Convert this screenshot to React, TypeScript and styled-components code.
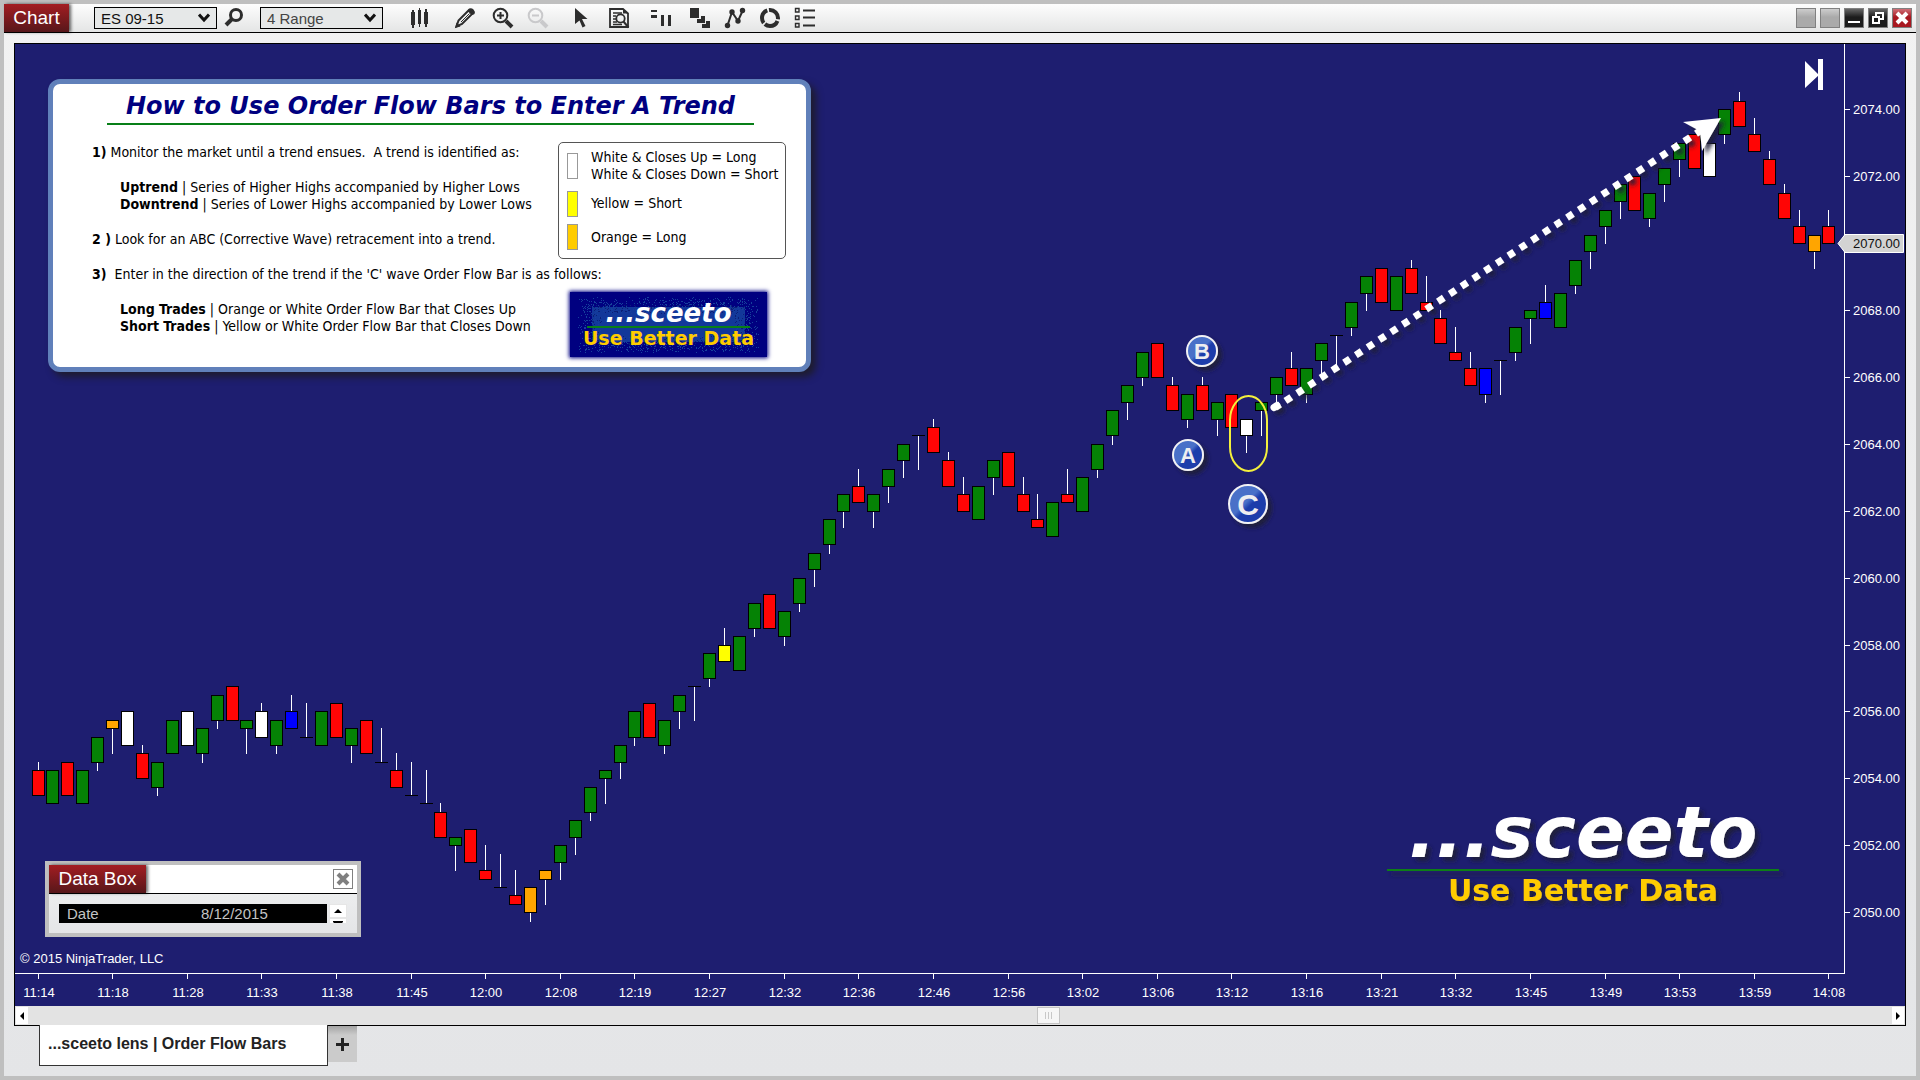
import React from "react";
import styled, { createGlobalStyle } from "styled-components";

const navy = "#1e1e70";
const sans = '"Liberation Sans", Arial, sans-serif';
const humanist = '"DejaVu Sans Condensed", "DejaVu Sans", Tahoma, sans-serif';
const display = '"DejaVu Sans", Verdana, sans-serif';

const GlobalStyle = createGlobalStyle`
  *, *::before, *::after { box-sizing: border-box; }
  body { margin: 0; font-family: ${sans}; }
  button, select { font: inherit; }
`;

/* ---------- market data ---------- */

type Candle = [color: string, high: number, top: number, bottom: number, low: number];

const fills: Record<string, string> = {
  R: "#ff0505",
  G: "#058205",
  W: "#ffffff",
  O: "#ffa500",
  Y: "#ffff00",
  B: "#0000ff",
  D: "#000000",
};

/* Each bar: colour, high, body top, body bottom, low, in quarter-point ticks above 2050.00 */
const candles: Candle[] = `
R 18 17 14 14|G 17 17 13 13|R 18 18 14 14|G 17 17 13 13|G 21 21 18 17|O 23 23 22 19|W 24 24 20 20|R 20 19 16 16
G 18 18 15 14|G 23 23 19 19|W 24 24 20 20|G 22 22 19 18|G 26 26 23 22|R 27 27 23 23|G 23 23 22 19|W 25 24 21 21
G 23 23 20 19|B 26 24 22 22|D 25 21 21 21|G 24 24 20 20|R 25 25 21 21|G 22 22 20 18|R 23 23 19 19|D 22 18 18 18
R 19 17 15 15|D 18 14 14 14|D 17 13 13 13|R 13 12 9 9|G 9 9 8 5|R 10 10 6 6|R 8 5 4 4|D 7 3 3 3
R 5 2 1 1|O 3 3 0 -1|O 5 5 4 1|G 8 8 6 4|G 11 11 9 7|G 15 15 12 11|G 17 17 16 13|G 20 20 18 16
G 24 24 21 20|R 25 25 21 21|G 23 23 20 19|G 26 26 24 22|D 27 27 27 23|G 31 31 28 27|Y 34 32 30 30|G 33 33 29 29
G 37 37 34 33|R 38 38 34 34|G 36 36 33 32|G 40 40 37 36|G 43 43 41 39|G 47 47 44 43|G 50 50 48 46|R 53 51 49 49
G 50 50 48 46|G 53 53 51 49|G 56 56 54 52|D 57 57 57 53|R 59 58 55 55|R 55 54 51 51|R 52 50 48 48|G 51 51 47 47
G 54 54 52 50|R 55 55 51 51|R 52 50 48 48|R 50 47 46 46|G 49 49 45 45|R 53 50 49 49|G 52 52 48 48|G 56 56 53 52
G 60 60 57 56|G 63 63 61 59|G 67 67 64 63|R 68 68 64 64|R 64 63 60 60|G 62 62 59 58|R 64 63 60 60|G 61 61 59 57
R 62 62 58 58|W 59 59 57 55|G 61 61 60 57|G 64 64 62 61|R 67 65 63 63|G 65 65 62 61|G 68 68 66 64|D 69 69 69 65
G 73 73 70 69|G 76 76 74 72|R 77 77 73 73|G 76 76 72 72|R 78 77 74 74|R 76 73 72 72|R 72 71 68 68|R 70 67 66 66
R 67 65 63 63|B 65 65 62 61|D 66 66 66 62|G 70 70 67 66|G 72 72 71 68|B 75 73 71 71|G 74 74 70 70|G 78 78 75 74
G 81 81 79 77|G 84 84 82 80|G 87 87 85 83|R 88 88 84 84|G 86 86 83 82|G 89 89 87 85|G 92 92 90 88|R 93 93 89 89
W 92 92 88 88|G 96 96 93 92|R 98 97 94 94|R 95 93 91 91|R 91 90 87 87|R 87 86 83 83|R 84 82 80 80|O 81 81 79 77
R 84 82 80 80`
  .trim()
  .split(/[|\n]/)
  .map((bar) => {
    const [color, ...values] = bar.trim().split(" ");
    return [color, ...values.map(Number)] as Candle;
  });

const times = [
  "11:14", "11:18", "11:28", "11:33", "11:38", "11:45", "12:00", "12:08", "12:19",
  "12:27", "12:32", "12:36", "12:46", "12:56", "13:02", "13:06", "13:12", "13:16",
  "13:21", "13:32", "13:45", "13:49", "13:53", "13:59", "14:08",
];

const prices = [2074, 2072, 2068, 2066, 2064, 2062, 2060, 2058, 2056, 2054, 2052, 2050];

const barX = (index: number) => 38 + index * 15 - Math.ceil(index / 13.3);
const tickY = (tick: number) => Math.round(912.2 - tick * 8.365);
const priceY = (price: number) => tickY((price - 2050) * 4);

/* ---------- window frame ---------- */

const Frame = styled.div`
  min-height: 100vh;
  display: flex;
  flex-direction: column;
  border: 4px solid #bfbfbf;
  background: linear-gradient(#f2f2f2, #e4e5e7);
`;

const TitleBar = styled.header`
  display: flex;
  align-items: center;
  height: 29px;
  padding-right: 4px;
  border-bottom: 1px solid #000;
  background: linear-gradient(#fdfdfd, #e4e5e5);
`;

const Caption = styled.h1<{ $width: number }>`
  width: ${(p) => p.$width}px;
  height: 28px;
  margin: 0;
  color: #fff;
  font-size: 19px;
  font-weight: 400;
  line-height: 27px;
  text-align: center;
  background: linear-gradient(#a31d22, #57171a);
  box-shadow: 2px 0 3px rgba(0, 0, 0, 0.6);
`;

const Picker = styled.label<{ $lead: number }>`
  display: grid;
  align-items: center;
  margin-left: ${(p) => p.$lead}px;

  & > * {
    grid-area: 1 / 1;
  }

  svg {
    justify-self: end;
    margin-right: 7px;
    pointer-events: none;
  }
`;

const Select = styled.select<{ $ink: string }>`
  appearance: none;
  width: 123px;
  height: 22px;
  padding: 0 24px 0 6px;
  border: 1px solid #000;
  border-radius: 0;
  background: #e6e8e8;
  color: ${(p) => p.$ink};
  font-size: 15px;
`;

const IconButton = styled.button<{ $lead: number }>`
  display: grid;
  place-items: center;
  width: 22px;
  height: 24px;
  margin-left: ${(p) => p.$lead}px;
  padding: 0;
  border: 0;
  background: none;
  color: #2d2d2d;

  &:disabled {
    color: #c9c9cb;
  }
`;

const WindowButtons = styled.div`
  display: flex;
  gap: 4px;
  margin-left: auto;
`;

const WindowButton = styled.button<{ $fill: string }>`
  display: grid;
  place-items: center;
  width: 20px;
  height: 20px;
  padding: 0;
  border: 1px solid #808080;
  background: ${(p) => p.$fill};
`;

const Workspace = styled.main`
  flex: 1;
  padding: 10px 10px 9px;
`;

const ChartPanel = styled.section`
  border: 1px solid #000;
  background: ${navy};
`;

const Plot = styled.div`
  position: relative;
`;

const ChartSvg = styled.svg`
  display: block;
  width: 100%;
  height: auto;
  font-family: ${sans};
  font-size: 13px;
`;

const ScrollTrack = styled.div`
  display: flex;
  justify-content: space-between;
  align-items: center;
  height: 19px;
  padding: 0 1px;
  background: #e3e3e3;
`;

const ScrollButton = styled.button`
  display: grid;
  place-items: center;
  width: 12px;
  height: 17px;
  padding: 0;
  border: 0;
  background: #fff;
`;

const Rail = styled.div`
  flex: 1;
  padding-left: calc(53% + 8px);
`;

const Thumb = styled.div`
  display: grid;
  place-items: center;
  width: 23px;
  height: 17px;
  border: 1px solid #c4c4c4;
  background: #f6f6f6;
`;

const Tabs = styled.nav`
  display: flex;
  align-items: flex-start;
  padding-left: 25px;
`;

const Tab = styled.button`
  width: 289px;
  height: 41px;
  margin-top: -1px;
  padding: 0 0 2px 8px;
  border: 1px solid #333;
  border-top: 0;
  background: #fff;
  color: #222;
  font-size: 16px;
  font-weight: 700;
  text-align: left;
`;

const AddTab = styled.button`
  display: grid;
  place-items: center;
  width: 29px;
  height: 36px;
  padding: 0;
  border: 0;
  background: linear-gradient(#a4a4a4, #cbcbcb 9px);
`;

/* ---------- instruction card ---------- */

const Card = styled.article`
  position: absolute;
  top: 35px;
  left: 33px;
  width: 763px;
  padding: 8px 20px 10px 39px;
  border: 5px solid #6080ba;
  border-radius: 12px;
  background: #fff;
  color: #000;
  box-shadow: 5px 5px 7px rgba(30, 28, 40, 0.9);
  font-family: ${humanist};
  font-size: 14px;
  line-height: 17px;
`;

const CardTitle = styled.h2`
  width: 647px;
  margin: 0 0 17px 15px;
  padding-bottom: 3px;
  border-bottom: 2px solid #087f18;
  color: #000080;
  font-family: ${display};
  font-size: 24px;
  font-style: italic;
  font-weight: 700;
  line-height: 28px;
  text-align: center;
  white-space: nowrap;
`;

const CardRow = styled.div`
  display: flex;
  justify-content: space-between;
  align-items: flex-start;
`;

const Steps = styled.div`
  padding-top: 2px;
`;

const Step = styled.p`
  margin: 0 0 18px;
  white-space: pre-wrap;
`;

const Detail = styled.p`
  margin: 0 0 18px 28px;
`;

const Legend = styled.ul`
  display: grid;
  grid-template-rows: 34px 25px 26px;
  gap: 8px;
  width: 228px;
  height: 117px;
  margin: 0 0 7px;
  padding: 6px 8px;
  border: 1px solid #555;
  border-radius: 5px;
  list-style: none;
`;

const LegendItem = styled.li`
  display: flex;
  align-items: center;
  gap: 13px;
  white-space: nowrap;
`;

const Swatch = styled.span<{ $fill: string }>`
  width: 11px;
  height: 26px;
  border: 1px solid #999;
  background: ${(p) => p.$fill};
`;

const Badge = styled.div`
  display: grid;
  width: 197px;
  height: 65px;
  margin: -9px 19px 0 0;
  background: #000080;
  box-shadow: 0 0 4px 1px #000080;

  & > * {
    grid-area: 1 / 1;
  }
`;

const BadgeText = styled.div`
  display: flex;
  flex-direction: column;
  align-items: center;
  padding-top: 8px;
  color: #ffcc00;
  font-family: ${display};
  font-size: 19px;
  font-weight: 700;
  line-height: 20px;
  white-space: nowrap;
`;

const BadgeName = styled.span`
  width: 163px;
  border-bottom: 2px solid #087f18;
  color: #fff;
  font-size: 26px;
  font-style: italic;
  line-height: 26px;
  text-align: center;
`;

/* ---------- data box ---------- */

const DataBox = styled.aside`
  position: absolute;
  bottom: 69px;
  left: 30px;
  width: 316px;
  border: 4px solid #bfbfbf;
  background: linear-gradient(#f2f3f3, #e4e5e7);
`;

const DataHeader = styled.div`
  display: flex;
  justify-content: space-between;
  align-items: center;
  padding-right: 4px;
  border-bottom: 1px solid #000;
  background: #fff;
`;

const DataBody = styled.div`
  display: flex;
  gap: 2px;
  padding: 10px 10px 10px;
`;

const DataTable = styled.table`
  width: 268px;
  border-collapse: collapse;
  background: #000;
  color: #c4c4c4;
  font-size: 15px;
  line-height: 19px;

  th,
  td {
    padding: 0 0 0 8px;
    font-weight: 400;
    text-align: left;
  }

  th {
    width: 134px;
  }
`;

const Spinner = styled.div`
  height: 19px;
  overflow: hidden;
`;

const SpinButton = styled.button`
  display: grid;
  place-items: center;
  width: 18px;
  height: 14px;
  padding: 0;
  border: 1px solid #e6e6e6;
  background: #fff;
`;

/* ---------- drawings ---------- */

const Chevron = () => (
  <svg width="12" height="10" viewBox="0 0 12 10" fill="none" stroke="#111" strokeWidth="3">
    <path d="M1 1.5 L6 7 L11 1.5" />
  </svg>
);

const Icon = ({ children }: { children: React.ReactNode }) => (
  <svg width="22" height="22" viewBox="0 0 22 22" fill="none" stroke="currentColor" strokeWidth="2">
    {children}
  </svg>
);

const tools: { name: string; lead: number; disabled?: boolean; art: React.ReactNode }[] = [
  {
    name: "Chart style",
    lead: 26,
    art: (
      <g fill="currentColor" stroke="none">
        <path d="M2 5h4v13H2zM9 3h3v14H9zM15 5h4v12h-4z" />
        <path d="M3 3h2v18H3zM10 1h1v19H10zM16 2h2v18h-2z" />
      </g>
    ),
  },
  {
    name: "Drawing tools",
    lead: 23,
    art: (
      <>
        <path d="M2.500 19.500 L4.500 13.500 L14.500 3.500 L18 7 L8 17 Z" />
        <path d="M7 15 L15.500 6.500" strokeWidth="1" />
        <path d="M15 1.500 Q17.500 .5 19.500 2.500 Q21.500 4.500 20.500 7 L18.500 8 L14 3 Z M1 21 L2.500 15.500 L6.500 19.500 Z" fill="currentColor" stroke="none" />
      </>
    ),
  },
  {
    name: "Zoom in",
    lead: 16,
    art: (
      <>
        <circle cx="8.500" cy="8.500" r="6.800" />
        <path d="M8.500 5v7M5 8.500h7" />
        <path d="M14 14 L20 20" strokeWidth="4" />
      </>
    ),
  },
  {
    name: "Zoom out",
    lead: 13,
    disabled: true,
    art: (
      <>
        <circle cx="8.500" cy="8.500" r="6.800" />
        <path d="M5 8.500h7" />
        <path d="M14 14 L20 20" strokeWidth="4" />
      </>
    ),
  },
  {
    name: "Cursor",
    lead: 21,
    art: <path d="M5 1 L17.500 12 L12 12 L15.500 19 L12.500 20.500 L9.500 13.500 L5 17 Z" fill="currentColor" stroke="none" />,
  },
  {
    name: "Data box",
    lead: 16,
    art: (
      <>
        <path d="M2 2H15L20 6.500V20H2Z" strokeWidth="1.800" />
        <path d="M5 6h9M5 9h3M5 12h3M5 15h4M5 17.500h9" strokeWidth="1.300" />
        <circle cx="12.500" cy="11.500" r="4.200" strokeWidth="1.800" />
        <path d="M15.500 14.500 L20.500 20.500" />
        <path d="M15 2V6.500H20Z" fill="currentColor" stroke="none" />
      </>
    ),
  },
  {
    name: "Data series",
    lead: 20,
    art: <path d="M1 3h6v2H1zM1 8h6v3H1zM11 8h3v11h-3zM18 8h3v11h-3z" fill="currentColor" stroke="none" />,
  },
  {
    name: "Indicators",
    lead: 17,
    art: (
      <g fill="currentColor" stroke="none">
        <rect x="1" y="1" width="9" height="10" />
        <path d="M12 9h4v7H8v-4h4zM17 14h4v7h-8v-4h4z" />
      </g>
    ),
  },
  {
    name: "Strategies",
    lead: 13,
    art: (
      <>
        <path d="M3.500 18.500 L8 5 L14 14 L18.500 4" />
        <g fill="currentColor" stroke="none">
          <circle cx="3.500" cy="18.500" r="2.700" />
          <circle cx="8" cy="5" r="2.700" />
          <circle cx="14" cy="14" r="2.700" />
          <circle cx="18.500" cy="3.500" r="2.700" />
        </g>
      </>
    ),
  },
  {
    name: "Reload",
    lead: 13,
    art: <circle cx="11" cy="11" r="8" strokeWidth="4" strokeDasharray="15 1.700" strokeDashoffset="-3" />,
  },
  {
    name: "Properties",
    lead: 13,
    art: (
      <>
        <path d="M1.500 1.500h3.500v3.500H1.500zM1.500 9h3.500v3.500H1.500zM1.500 16.500h3.500v3.500H1.500z" strokeWidth="1.400" />
        <path d="M9 3.500h12M9 10.500h12M9 18.500h12" />
      </>
    ),
  },
];

/* Scattered specks that roughen the edge of the badge's bright centre */
const specks = Array.from({ length: 2600 }, (_, i) => {
  const noise = (n: number) => {
    const v = Math.sin(n * 127.1 + 11.7) * 43758.5453;
    return v - Math.floor(v);
  };
  const x = 8 + noise(i) * 181;
  const y = 5 + noise(i + 5000) * 56;
  const edge = Math.min(x - 6, 191 - x, (y - 3) * 1.4, (63 - y) * 1.4);
  return {
    x: Math.floor(x),
    y: Math.floor(y),
    bright: edge < 14 || noise(i + 3000) > 0.6,
    show: edge < 26 && noise(i + 9000) * 14 < edge,
  };
});

const BadgeTexture = () => (
  <svg width="197" height="65" viewBox="0 0 197 65" shapeRendering="crispEdges">
    <rect x="22" y="15" width="153" height="35" fill="#12389a" />
    {specks.map((s, i) =>
      s.show ? <rect key={i} x={s.x} y={s.y} width="1" height="1" fill={s.bright ? "#16409c" : "#0a1f78"} /> : null
    )}
  </svg>
);

const CandleBar = ({ candle, index }: { candle: Candle; index: number }) => {
  const [color, high, top, bottom, low] = candle;
  const x = barX(index);
  const bodyTop = tickY(top);
  const bodyBottom = tickY(bottom);
  return (
    <g>
      {high > top && <rect x={x} y={tickY(high)} width="1" height={bodyTop - tickY(high)} fill="#fff" />}
      {low < bottom && <rect x={x} y={bodyBottom} width="1" height={tickY(low) - bodyBottom + 1} fill="#fff" />}
      <rect x={x - 6} y={bodyTop} width="13" height={bodyBottom - bodyTop + 1} fill="#000" />
      {top > bottom && (
        <rect x={x - 5} y={bodyTop + 1} width="11" height={bodyBottom - bodyTop - 1} fill={fills[color]} />
      )}
    </g>
  );
};

const Marker = ({ letter, x, y, r, size }: { letter: string; x: number; y: number; r: number; size: number }) => (
  <g>
    <circle cx={x} cy={y} r={r} fill="url(#marker)" stroke="#f2f2f5" strokeWidth="2" filter="url(#drop)" />
    <text x={x} y={y + size * 0.36} textAnchor="middle" fontSize={size} fontWeight="700" fill="#eeeef0">
      {letter}
    </text>
  </g>
);

const Chart = () => (
  <ChartSvg viewBox="15 44 1890 962" role="img" aria-label="ES 09-15 four range order flow chart">
    <defs>
      <filter id="drop" x="-30%" y="-30%" width="170%" height="170%">
        <feDropShadow dx="4" dy="4" stdDeviation="2" floodColor="#1c1c38" floodOpacity="0.9" />
      </filter>
      <linearGradient id="marker" x1="0" y1="0" x2="1" y2="1">
        <stop offset="0.45" stopColor="#4a70c8" />
        <stop offset="0.55" stopColor="#1c3cab" />
      </linearGradient>
    </defs>

    <g shapeRendering="crispEdges">
      <rect x="15" y="973" width="1830" height="1" fill="#fff" />
      <rect x="1844" y="44" width="1" height="930" fill="#fff" />
      {times.map((time, i) => (
        <rect key={time} x={barX(i * 5)} y="974" width="1" height="5" fill="#fff" />
      ))}
      {prices.map((price) => (
        <rect key={price} x="1845" y={priceY(price)} width="5" height="1" fill="#fff" />
      ))}
      {candles.map((candle, i) => (
        <CandleBar key={i} candle={candle} index={i} />
      ))}
    </g>

    <g fill="#fff">
      {times.map((time, i) => (
        <text key={time} x={barX(i * 5) + 1} y="997" textAnchor="middle">
          {time}
        </text>
      ))}
      {prices.map((price) => (
        <text key={price} x="1853" y={priceY(price) + 5}>
          {price.toFixed(2)}
        </text>
      ))}
      <text x="20" y="963">© 2015 NinjaTrader, LLC</text>
    </g>

    <path d="M1838 243.500 L1845 234.500 H1903.500 V252.500 H1845 Z" fill="#d3d3d3" stroke="#fff" />
    <text x="1853" y="248" fill="#111">
      2070.00
    </text>

    <path d="M1805 61 L1819 75 L1805 88 Z M1818 59 h5 v31 h-5 Z" fill="#fff" />

    <g filter="url(#drop)">
      <path d="M1274 407.500 L1277 405.500" stroke="#fff" strokeWidth="7" strokeLinecap="round" />
      <path d="M1275.500 407.300 L1280 404.400" stroke="#fff" strokeWidth="7" />
      <path d="M1285.400 400.900 L1702 129.700" stroke="#fff" strokeWidth="7" strokeDasharray="7 7" />
      <path d="M1721 118 L1683 122 L1700 131 L1702 151 Z" fill="#fff" />
    </g>

    <rect x="1230" y="396" width="37" height="75" rx="18.500" ry="24" fill="none" stroke="#f4f03c" strokeWidth="2" />
    <Marker letter="B" x={1202} y={351} r={15} size={22} />
    <Marker letter="A" x={1188} y={455} r={15} size={22} />
    <Marker letter="C" x={1248} y={504} r={19} size={30} />

    <g fontFamily={display} fontWeight="700" filter="url(#drop)">
      <text x="1583" y="857" fontSize="72" fontStyle="italic" textAnchor="middle" fill="#fff">
        ...sceeto
      </text>
      <rect x="1387" y="869" width="392" height="2" fill="#087f18" />
      <text x="1583" y="901" fontSize="30" textAnchor="middle" fill="#ffcc00">
        Use Better Data
      </text>
    </g>
  </ChartSvg>
);

/* ---------- page ---------- */

export default function App() {
  return (
    <>
      <GlobalStyle />
      <Frame>
        <TitleBar>
          <Caption $width={65}>Chart</Caption>
          <Picker $lead={25}>
            <Select $ink="#111" aria-label="Instrument">
              <option>ES 09-15</option>
            </Select>
            <Chevron />
          </Picker>
          <IconButton $lead={5} aria-label="Find instrument">
            <Icon>
              <circle cx="14" cy="8" r="5.500" strokeWidth="3" />
              <path d="M10 12 L4 18" strokeWidth="4" />
            </Icon>
          </IconButton>
          <Picker $lead={16}>
            <Select $ink="#444" aria-label="Interval">
              <option>4 Range</option>
            </Select>
            <Chevron />
          </Picker>
          {tools.map((tool) => (
            <IconButton key={tool.name} $lead={tool.lead} disabled={tool.disabled} aria-label={tool.name}>
              <Icon>{tool.art}</Icon>
            </IconButton>
          ))}
          <WindowButtons>
            <WindowButton $fill="linear-gradient(#cdcdcd, #aaa 45%)" aria-label="Link instrument" />
            <WindowButton $fill="linear-gradient(#cdcdcd, #aaa 45%)" aria-label="Link interval" />
            <WindowButton $fill="linear-gradient(#666, #1c1c1c 45%)" aria-label="Minimize">
              <svg width="18" height="18" viewBox="0 0 18 18">
                <path d="M3 12h12v2H3z" fill="#fff" />
              </svg>
            </WindowButton>
            <WindowButton $fill="linear-gradient(#666, #1c1c1c 45%)" aria-label="Restore">
              <svg width="18" height="18" viewBox="0 0 18 18" fill="none" stroke="#fff" strokeWidth="2">
                <path d="M7 7V4h7v6h-3M4 8h6v6H4z" />
              </svg>
            </WindowButton>
            <WindowButton $fill="linear-gradient(#cf7078, #a81820 45%)" aria-label="Close">
              <svg width="18" height="18" viewBox="0 0 18 18" stroke="#fff" strokeWidth="4">
                <path d="M4 4 L14 14 M14 4 L4 14" />
              </svg>
            </WindowButton>
          </WindowButtons>
        </TitleBar>

        <Workspace>
          <ChartPanel>
            <Plot>
              <Chart />

              <Card>
                <CardTitle>How to Use Order Flow Bars to Enter A Trend</CardTitle>
                <CardRow>
                  <Steps>
                    <Step>
                      <b>1)</b> Monitor the market until a trend ensues.{"  "}A trend is identified as:
                    </Step>
                    <Detail>
                      <b>Uptrend</b> | Series of Higher Highs accompanied by Higher Lows
                      <br />
                      <b>Downtrend</b> | Series of Lower Highs accompanied by Lower Lows
                    </Detail>
                    <Step>
                      <b>2 )</b> Look for an ABC (Corrective Wave) retracement into a trend.
                    </Step>
                  </Steps>
                  <Legend>
                    <LegendItem>
                      <Swatch $fill="#fff" />
                      <span>
                        White &amp; Closes Up = Long
                        <br />
                        White &amp; Closes Down = Short
                      </span>
                    </LegendItem>
                    <LegendItem>
                      <Swatch $fill="#ffff00" />
                      Yellow = Short
                    </LegendItem>
                    <LegendItem>
                      <Swatch $fill="#ffcc00" />
                      Orange = Long
                    </LegendItem>
                  </Legend>
                </CardRow>
                <Step>
                  <b>3)</b>
                  {"  "}Enter in the direction of the trend if the 'C' wave Order Flow Bar is as follows:
                </Step>
                <CardRow>
                  <Detail>
                    <b>Long Trades</b> | Orange or White Order Flow Bar that Closes Up
                    <br />
                    <b>Short Trades</b> | Yellow or White Order Flow Bar that Closes Down
                  </Detail>
                  <Badge>
                    <BadgeTexture />
                    <BadgeText>
                      <BadgeName>...sceeto</BadgeName>
                      Use Better Data
                    </BadgeText>
                  </Badge>
                </CardRow>
              </Card>

              <DataBox>
                <DataHeader>
                  <Caption as="h2" $width={97}>
                    Data Box
                  </Caption>
                  <WindowButton $fill="#fff" aria-label="Close data box">
                    <svg width="18" height="18" viewBox="0 0 18 18" stroke="#808080" strokeWidth="4">
                      <path d="M4 4 L14 14 M14 4 L4 14" />
                    </svg>
                  </WindowButton>
                </DataHeader>
                <DataBody>
                  <DataTable>
                    <tbody>
                      <tr>
                        <th scope="row">Date</th>
                        <td>8/12/2015</td>
                      </tr>
                    </tbody>
                  </DataTable>
                  <Spinner>
                    <SpinButton aria-label="Scroll up">
                      <svg width="8" height="4" viewBox="0 0 8 4">
                        <path d="M0 4 L4 0 L8 4Z" />
                      </svg>
                    </SpinButton>
                    <SpinButton aria-label="Scroll down">
                      <svg width="10" height="8" viewBox="0 0 10 8">
                        <path d="M0 0h10v1L5 6L0 1Z" />
                      </svg>
                    </SpinButton>
                  </Spinner>
                </DataBody>
              </DataBox>
            </Plot>

            <ScrollTrack>
              <ScrollButton aria-label="Scroll left">
                <svg width="4" height="8" viewBox="0 0 4 8">
                  <path d="M4 0 L0 4 L4 8Z" />
                </svg>
              </ScrollButton>
              <Rail>
                <Thumb>
                  <svg width="9" height="7" viewBox="0 0 9 7">
                    <path d="M1 0h1v7H1zM4 0h1v7H4zM7 0h1v7H7z" fill="#c8c8c8" />
                  </svg>
                </Thumb>
              </Rail>
              <ScrollButton aria-label="Scroll right">
                <svg width="4" height="8" viewBox="0 0 4 8">
                  <path d="M0 0 L4 4 L0 8Z" />
                </svg>
              </ScrollButton>
            </ScrollTrack>
          </ChartPanel>

          <Tabs>
            <Tab>...sceeto lens | Order Flow Bars</Tab>
            <AddTab aria-label="Add tab">
              <svg width="13" height="13" viewBox="0 0 13 13">
                <path d="M5 0h3v5h5v3H8v5H5V8H0V5h5z" fill="#222" />
              </svg>
            </AddTab>
          </Tabs>
        </Workspace>
      </Frame>
    </>
  );
}
